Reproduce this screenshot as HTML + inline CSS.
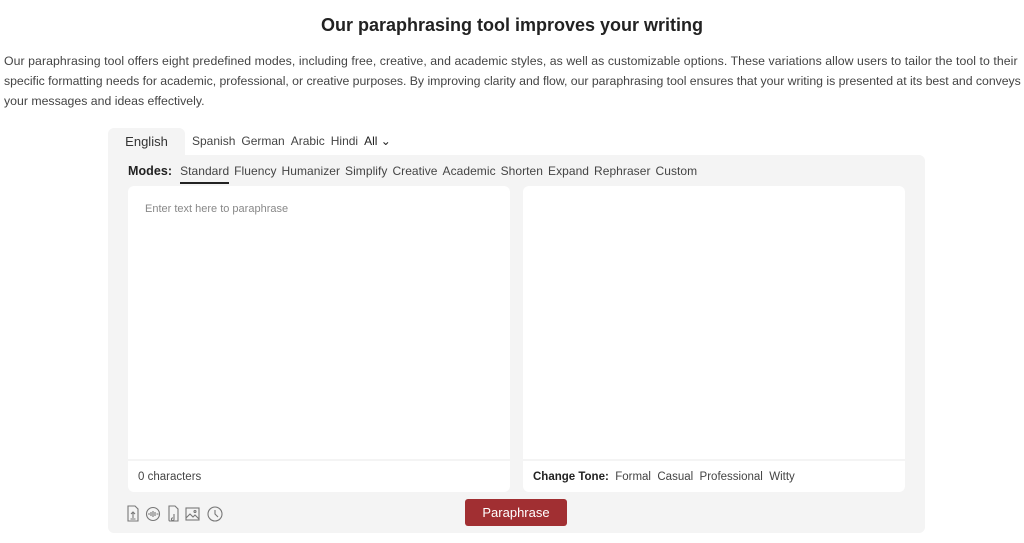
<!DOCTYPE html>
<html><head><meta charset="utf-8"><style>
*{margin:0;padding:0;box-sizing:border-box}
body{width:1024px;height:543px;background:#fff;font-family:"Liberation Sans",sans-serif;color:#333;position:relative;overflow:hidden}
h1{position:absolute;top:15px;left:0;width:1024px;text-align:center;font-size:18px;font-weight:bold;color:#222}
p.intro{position:absolute;top:51px;left:4px;width:1024px;font-size:12.3px;line-height:20px;color:#444;white-space:nowrap}
.tab{position:absolute;top:128px;left:108px;width:77px;height:28px;background:#f4f4f4;border-radius:6px 6px 0 0;font-size:13px;text-align:center;line-height:28px;color:#333}
.langs{position:absolute;top:134px;left:192px;font-size:12px;color:#444}
.langs span{margin-right:6px}
.box{position:absolute;top:155px;left:108px;width:817px;height:378px;background:#f4f4f4;border-radius:0 6px 6px 6px}
.modes{position:absolute;top:164px;left:128px;font-size:12px;color:#444;letter-spacing:0.05px}
.modes b{font-size:12.5px;color:#222;margin-right:8px}
.modes span{margin-right:5px;position:relative;display:inline-block}
.modes .act:after{content:"";position:absolute;left:0;right:0;bottom:-6px;height:2px;background:#222}
.panel{position:absolute;top:186px;width:382px;height:306px;background:#fff;border-radius:6px}
.panel .ft{position:absolute;left:0;right:0;top:273px;border-top:2px solid #f4f4f4;padding:10px 10px;font-size:11.5px;color:#444}
.ph{position:absolute;left:17px;top:17px;font-size:11px;color:#888}
.btn{position:absolute;left:465px;top:499px;width:102px;height:27px;background:#a12f32;border-radius:3px;color:#fff;font-size:13px;text-align:center;line-height:28px}
.icons{position:absolute;left:127px;top:505px}
</style></head><body>
<h1>Our paraphrasing tool improves your writing</h1>
<p class="intro"><span style="letter-spacing:0.06px">Our paraphrasing tool offers eight predefined modes, including free, creative, and academic styles, as well as customizable options. These variations allow users to tailor the tool to their</span><br><span style="letter-spacing:-0.03px">specific formatting needs for academic, professional, or creative purposes. By improving clarity and flow, our paraphrasing tool ensures that your writing is presented at its best and conveys</span><br>your messages and ideas effectively.</p>
<div class="box"></div>
<div class="tab">English</div>
<div class="langs"><span>Spanish</span><span>German</span><span>Arabic</span><span>Hindi</span><span style="color:#222">All ⌄</span></div>
<div class="modes"><b>Modes:</b><span class="act">Standard</span><span>Fluency</span><span>Humanizer</span><span>Simplify</span><span>Creative</span><span>Academic</span><span>Shorten</span><span>Expand</span><span>Rephraser</span><span>Custom</span></div>
<div class="panel" style="left:128px"><div class="ph">Enter text here to paraphrase</div><div class="ft">0 characters</div></div>
<div class="panel" style="left:523px"><div class="ft"><b style="font-weight:600;color:#222">Change Tone:</b>&nbsp; Formal &nbsp;Casual &nbsp;Professional &nbsp;Witty</div></div>
<svg class="icons" width="100" height="18" viewBox="0 0 100 18" fill="none" stroke="#777" stroke-width="1.1">
<path d="M1 1h7l3 3v12H1z"/><path d="M6 13V7M4 9l2-2 2 2M3.5 14h5"/>
<circle cx="26" cy="9" r="6.5"/><path d="M21 9h2M24 7v4M26 6v6M28 7v4M29.5 9h2"/>
<path d="M42 1h6l3 3v12h-8a1 1 0 0 1-1-1z"/><path d="M47 9v5M47 14a1.3 1.3 0 1 1-1-1"/>
<rect x="59" y="3" width="13" height="12"/><path d="M59 13l4-4 3 3 2-2 4 4"/><circle cx="68" cy="6.5" r="1"/>
<circle cx="88" cy="9" r="7"/><path d="M88 5v4l3 3"/>
</svg>
<div class="btn">Paraphrase</div>
</body></html>
